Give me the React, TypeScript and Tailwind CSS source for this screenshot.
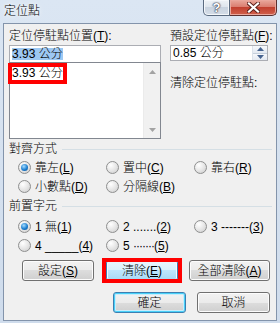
import React from "react";

const M = ({ c }: { c: string }) => (
  <span>
    (<span className="underline underline-offset-[1px] decoration-1">{c}</span>)
  </span>
);

function Radio({ checked }: { checked?: boolean }) {
  return (
    <span className="w-[13px] h-[13px] rounded-full border border-[#8e8f8f] bg-[radial-gradient(circle_at_35%_30%,#ffffff,#e4e4e4_55%,#c9c9c9)] flex items-center justify-center shrink-0">
      {checked && (
        <span className="w-[7px] h-[7px] rounded-full bg-[radial-gradient(circle_at_40%_35%,#a6dcff,#1c7fd0_55%,#0a4a8e)]" />
      )}
    </span>
  );
}

function Opt({ checked, children }: { checked?: boolean; children: React.ReactNode }) {
  return (
    <div className="flex items-center gap-[4px] h-[19px]">
      <Radio checked={checked} />
      <span className="whitespace-nowrap">{children}</span>
    </div>
  );
}

function GroupHead({ title }: { title: string }) {
  return (
    <div className="flex items-center pl-[5px] pr-[4px] h-[14px]">
      <span className="whitespace-nowrap">{title}</span>
      <div className="flex-1 ml-[5px] h-px bg-[#d5dfe5]" />
    </div>
  );
}

function Btn({
  className,
  variant,
  children,
}: {
  className: string;
  variant?: "hover" | "default";
  children: React.ReactNode;
}) {
  const base =
    "h-[21px] rounded-[3px] border flex items-center justify-center shrink-0 whitespace-nowrap";
  let v =
    "border-[#707070] bg-[linear-gradient(#f2f2f2_0%,#ebebeb_50%,#dddddd_50%,#cfcfcf_100%)] shadow-[inset_0_0_0_1px_#fcfcfc]";
  if (variant === "hover")
    v =
      "border-[#3c7fb1] bg-[linear-gradient(#eaf6fd_0%,#d9f0fc_50%,#bee6fd_50%,#a7d9f5_100%)] shadow-[inset_0_0_0_1px_#f5fbfe]";
  if (variant === "default")
    v =
      "border-[#3c7fb1] bg-[linear-gradient(#f2f2f2_0%,#ebebeb_50%,#dddddd_50%,#cfcfcf_100%)] shadow-[inset_0_0_0_1px_#48d0f8,inset_0_0_0_2px_#c8ecfb]";
  return <div className={`${base} ${v} ${className}`}>{children}</div>;
}

const UpArrow = ({ color }: { color: string }) => (
  <svg width="7" height="4" viewBox="0 0 7 4">
    <path d="M0 4 L3.5 0 L7 4 Z" fill={color} />
  </svg>
);
const DownArrow = ({ color }: { color: string }) => (
  <svg width="7" height="4" viewBox="0 0 7 4">
    <path d="M0 0 L7 0 L3.5 4 Z" fill={color} />
  </svg>
);

export default function App() {
  return (
    <div className="w-[280px] h-[323px] overflow-hidden flex flex-col bg-[linear-gradient(#dbe6f3,#cfdcec)] text-[12px] leading-[14px] font-light text-black font-['Liberation_Sans','Noto_Sans_CJK_TC',sans-serif]">
      {/* Title bar */}
      <div className="h-[23px] flex items-start justify-between shrink-0">
        <div className="pl-[4px] pt-[4px] [text-shadow:0_0_6px_#ffffff,0_0_3px_#ffffff]">定位點</div>
        <div className="flex mr-[3px]">
          <div className="w-[27px] h-[16px] border border-t-0 border-[#5b6b80] rounded-bl-[5px] bg-[linear-gradient(#eef2f6_0%,#dde4ec_50%,#c9d3df_50%,#d4dde8_100%)] flex items-center justify-center shadow-[inset_0_0_0_1px_#f4f7fa]">
            <span className="text-white font-bold text-[13px] leading-[13px] [text-shadow:0_0_1px_#334,0_0_1px_#334,0_0_2px_#334]">?</span>
          </div>
          <div className="w-[47px] h-[16px] border border-t-0 border-l-0 border-[#5b3030] rounded-br-[5px] bg-[linear-gradient(#e9a89c_0%,#d9796b_50%,#c2402f_50%,#d0604c_100%)] flex items-center justify-center shadow-[inset_0_0_0_1px_#eaa79c]">
            <svg width="13" height="11" viewBox="0 0 13 11">
              <path d="M2 1.5 L11 9.5 M11 1.5 L2 9.5" stroke="#5a1f1a" strokeWidth="4" strokeLinecap="square" />
              <path d="M2 1.5 L11 9.5 M11 1.5 L2 9.5" stroke="#ffffff" strokeWidth="2.2" strokeLinecap="square" />
            </svg>
          </div>
        </div>
      </div>

      {/* Client area */}
      <div className="flex-1 mx-[3px] mb-[2px] bg-[#f0f0f0] border border-[#8394ab] flex flex-col">
        {/* Top section */}
        <div className="flex mt-[5px] pl-[5px]">
          <div className="w-[152px] flex flex-col">
            <div className="h-[14px] whitespace-nowrap">
              定位停駐點位置<M c="T" />:
            </div>
            <div className="mt-[2px] h-[17px] border border-b-0 border-[#abadb3] bg-white flex items-center pl-[2px]">
              <span className="bg-[#9dc8f2] h-[12px] leading-[12px]">3.93 公分</span>
            </div>
            <div className="h-[77px] border border-[#828790] bg-white flex">
              <div className="flex-1 pl-[2px] pt-[3px]">
                <span className="relative inline-block leading-[13px]">
                  3.93 公分
                  <span className="absolute -left-[4px] -right-[4px] -top-[4px] -bottom-[4px] border-[4px] border-[#ff0000]" />
                </span>
              </div>
              <div className="w-[17px] bg-[#f1f1f1] border-l border-[#ebebeb] flex flex-col justify-between">
                <div className="h-[17px] flex items-center justify-center">
                  <UpArrow color="#a3a3a3" />
                </div>
                <div className="h-[17px] flex items-center justify-center">
                  <DownArrow color="#a3a3a3" />
                </div>
              </div>
            </div>
          </div>
          <div className="w-[98px] ml-[9px] flex flex-col">
            <div className="h-[14px] whitespace-nowrap">
              預設定位停駐點<M c="F" />:
            </div>
            <div className="mt-[2px] h-[16px] border border-[#abadb3] bg-white flex">
              <span className="flex-1 pl-[2px] leading-[14px]">0.85 公分</span>
              <div className="w-[15px] flex flex-col border-l border-[#dbe2ea]">
                <div className="flex-1 flex items-center justify-center bg-[linear-gradient(#f6f8fb,#e3e9f1)] border-b border-[#c5cfdb]">
                  <UpArrow color="#46638f" />
                </div>
                <div className="flex-1 flex items-center justify-center bg-[linear-gradient(#f6f8fb,#e3e9f1)]">
                  <DownArrow color="#46638f" />
                </div>
              </div>
            </div>
            <div className="mt-[15px] h-[14px] whitespace-nowrap">清除定位停駐點:</div>
          </div>
        </div>

        {/* Alignment group */}
        <div className="mt-[3px]">
          <GroupHead title="對齊方式" />
        </div>
        <div className="mt-[2px] pl-[14px] grid grid-cols-[88px_88px_1fr]">
          <Opt checked>
            靠左<M c="L" />
          </Opt>
          <Opt>
            置中<M c="C" />
          </Opt>
          <Opt>
            靠右<M c="R" />
          </Opt>
          <Opt>
            小數點<M c="D" />
          </Opt>
          <Opt>
            分隔線<M c="B" />
          </Opt>
        </div>

        {/* Leader group */}
        <div className="mt-[3px]">
          <GroupHead title="前置字元" />
        </div>
        <div className="mt-[4px] pl-[14px] grid grid-cols-[88px_88px_1fr]">
          <Opt checked>
            1 無<M c="1" />
          </Opt>
          <Opt>
            2 .......<M c="2" />
          </Opt>
          <Opt>
            3 -------<M c="3" />
          </Opt>
          <Opt>
            4 _____<M c="4" />
          </Opt>
          <Opt>
            5 <span className="tracking-[-1px]">·······</span>
            <M c="5" />
          </Opt>
        </div>

        {/* Buttons row 1 */}
        <div className="mt-[5px] flex pl-[18px]">
          <Btn className="w-[72px]">
            設定<M c="S" />
          </Btn>
          <div className="relative ml-[12px]">
            <Btn className="w-[72px]" variant="hover">
              清除<M c="E" />
            </Btn>
            <span className="absolute -left-[4px] -right-[4px] -top-[2px] -bottom-[2px] border-[4px] border-[#ff0000]" />
          </div>
          <Btn className="w-[81px] ml-[11px]">
            全部清除<M c="A" />
          </Btn>
        </div>

        {/* Buttons row 2 */}
        <div className="mt-[11px] flex pl-[109px]">
          <Btn className="w-[73px]" variant="default">
            確定
          </Btn>
          <Btn className="w-[73px] ml-[11px]">取消</Btn>
        </div>
      </div>
    </div>
  );
}
